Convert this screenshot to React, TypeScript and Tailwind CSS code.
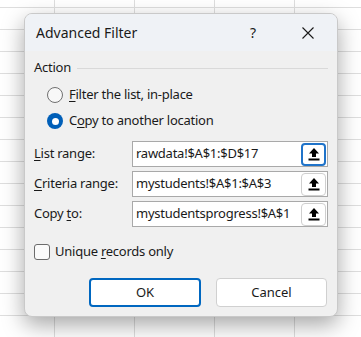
import React from "react";

function UploadIcon() {
  return (
    <svg width="12" height="14" viewBox="0 0 12 14" fill="#000">
      <path d="M6 1 L11 6.5 H8 V10 H4 V6.5 H1 Z" />
      <rect x="0.5" y="11.5" width="11" height="2" />
    </svg>
  );
}

function RangeRow({
  label,
  value,
  focused,
}: {
  label: React.ReactNode;
  value: string;
  focused?: boolean;
}) {
  return (
    <div className="flex items-center h-[26px]">
      <div className="w-[98px] shrink-0">{label}</div>
      <div className="flex-1 min-w-0 h-[26px] bg-white border border-[#a9a9a9] flex items-center pl-[3px] pr-px">
        <span className="flex-1 text-[#1a1a1a] whitespace-nowrap overflow-hidden">{value}</span>
        <button
          className={
            focused
              ? "w-[25px] h-[23px] shrink-0 rounded-[4px] bg-white border-2 border-[#1f73c9] flex items-center justify-center"
              : "w-[25px] h-[23px] shrink-0 rounded-[4px] bg-white border border-[#cfcfcf] flex items-center justify-center"
          }
        >
          <UploadIcon />
        </button>
      </div>
    </div>
  );
}

export default function App() {
  return (
    <div className="w-[361px] h-[337px] overflow-hidden bg-white bg-[linear-gradient(to_right,#dedede_1px,transparent_1px),linear-gradient(to_bottom,#dedede_1px,transparent_1px)] bg-[size:80px_22px] bg-[position:54px_7px] pt-[13px] pl-[24px] font-['Noto_Sans',sans-serif] text-[13px] tracking-[-0.25px] text-[#1a1a1a]">
      <div className="w-[314px] h-[304px] rounded-[8px] bg-[#f0f0f0] border border-[#c9c9c9] shadow-[0_8px_22px_rgba(0,0,0,0.35)] flex flex-col overflow-hidden">
        <div className="h-[37px] bg-[#eff2f6] flex items-center pl-[11px] shrink-0">
          <span className="text-[14px] tracking-normal">Advanced Filter</span>
          <span className="ml-auto text-[14px] w-[14px] text-center">?</span>
          <svg className="ml-[42px] mr-[23px]" width="12" height="12" viewBox="0 0 12 12" stroke="#1a1a1a" strokeWidth="1.1">
            <path d="M0.5 0.5 L11.5 11.5 M11.5 0.5 L0.5 11.5" />
          </svg>
        </div>

        <div className="flex-1 flex flex-col px-[9px] pt-[7px]">
          <div className="flex items-center h-[20px]">
            <span>Action</span>
            <div className="flex-1 h-px bg-[#d9d9d9] ml-[6px]" />
          </div>

          <div className="flex flex-col gap-[2px] mt-[5px] pl-[13px]">
            <div className="flex items-center h-[24px] gap-[6px]">
              <span className="w-[16px] h-[16px] rounded-full border border-[#707070] bg-[#f8f8f8]" />
              <span>
                <u className="underline-offset-[2px]">F</u>ilter the list, in-place
              </span>
            </div>
            <div className="flex items-center h-[24px] gap-[6px]">
              <span className="w-[16px] h-[16px] rounded-full bg-[#005fb8] flex items-center justify-center">
                <span className="w-[7px] h-[7px] rounded-full bg-white" />
              </span>
              <span>
                C<u className="underline-offset-[2px]">o</u>py to another location
              </span>
            </div>
          </div>

          <div className="flex flex-col gap-[4px] mt-[8px]">
            <RangeRow
              label={<><u className="underline-offset-[2px]">L</u>ist range:</>}
              value="rawdata!$A$1:$D$17"
              focused
            />
            <RangeRow
              label={<><u className="underline-offset-[2px]">C</u>riteria range:</>}
              value="mystudents!$A$1:$A$3"
            />
            <RangeRow
              label={<>Copy <u className="underline-offset-[2px]">t</u>o:</>}
              value="mystudentsprogress!$A$1"
            />
          </div>

          <div className="flex items-center h-[20px] gap-[5px] mt-[15px]">
            <span className="w-[16px] h-[16px] rounded-[3px] border border-[#6b6b6b] bg-[#fafafa]" />
            <span>
              Unique <u className="underline-offset-[2px]">r</u>ecords only
            </span>
          </div>

          <div className="flex justify-end gap-[15px] mt-[16px] pr-px">
            <button className="w-[112px] h-[29px] rounded-[4px] bg-white border-2 border-[#0067c0] tracking-normal">
              OK
            </button>
            <button className="w-[111px] h-[29px] rounded-[4px] bg-white border border-[#d0d0d0] tracking-normal">
              Cancel
            </button>
          </div>
        </div>
      </div>
    </div>
  );
}
